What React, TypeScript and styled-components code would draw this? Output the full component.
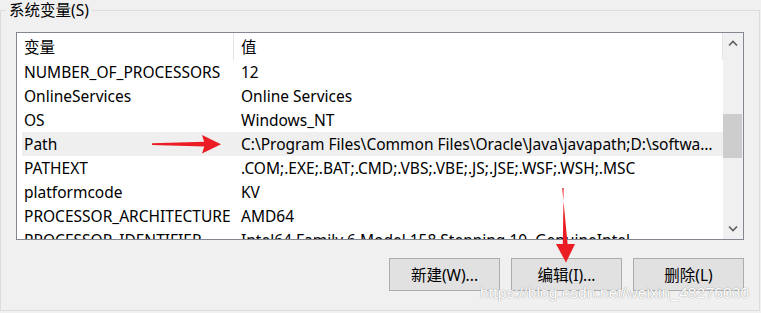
import React, { FC } from "react";
import styled, { createGlobalStyle } from "styled-components";

const GlobalStyle = createGlobalStyle`
	html, body {
		margin: 0;
		padding: 0;
		background: #f0f0f0;
		width: 761px;
		height: 313px;
		overflow: hidden;
	}
`;

const FONT = `"Noto Sans", "Noto Sans CJK SC", sans-serif`;

const Page = styled.div`
	position: relative;
	width: 761px;
	height: 313px;
	font-family: ${FONT};
	font-size: 15.5px;
	color: #000;
`;

const Group = styled.fieldset`
	margin: 0;
	padding: 0 0 19px 0;
	width: 760px;
	height: 311px;
	box-sizing: border-box;
	border: 1px solid #dcdcdc;
	display: flex;
	flex-direction: column;
`;

const Legend = styled.legend`
	margin-left: 5px;
	padding: 0 3px;
	line-height: 20px;
	font-size: 15.5px;
`;

const ListBox = styled.div`
	margin: 12px 15px 0 15px;
	height: 208px;
	box-sizing: border-box;
	border: 1px solid #828790;
	background: #fff;
	display: flex;
	overflow: hidden;
`;

const Table = styled.div`
	flex: 1;
	min-width: 0;
	padding-left: 5px;
	overflow: hidden;
`;

const Row = styled.div<{ $selected?: boolean; $header?: boolean }>`
	display: grid;
	grid-template-columns: 212px 489px;
	height: ${(p) => (p.$header ? "27px" : "24px")};
	line-height: ${(p) => (p.$header ? "28px" : "24px")};
	background: ${(p) => (p.$selected ? "#efefef" : "transparent")};
	white-space: nowrap;
`;

const Cell = styled.div<{ $header?: boolean; $value?: boolean }>`
	padding-left: ${(p) => (p.$value ? "7px" : "2px")};
	padding-right: ${(p) => (p.$value ? "6px" : "0")};
	overflow: hidden;
	text-overflow: ${(p) => (p.$value ? "ellipsis" : "clip")};
	border-right: ${(p) => (p.$header ? "1px solid #e5e5e5" : "none")};
	box-sizing: border-box;
`;

const ScrollBar = styled.div`
	width: 20px;
	flex: none;
	background: #f0f0f0;
	display: flex;
	flex-direction: column;
`;

const ScrollButton = styled.div`
	height: 20px;
	display: flex;
	align-items: center;
	justify-content: center;
	color: #606060;
`;

const Track = styled.div`
	flex: 1;
`;

const Thumb = styled.div`
	margin: 61px 1px 0 0;
	height: 44px;
	background: #cdcdcd;
`;

const ButtonRow = styled.div`
	margin: 18px 15px 0 0;
	display: flex;
	justify-content: flex-end;
	gap: 11px;
`;

const Button = styled.button`
	width: 111px;
	height: 33px;
	border: 1px solid #adadad;
	background: #e1e1e1;
	font-family: ${FONT};
	font-size: 15.5px;
	color: #000;
	padding: 0;
`;

const Watermark = styled.div`
	position: absolute;
	left: 480px;
	top: 284px;
	font-family: "Liberation Sans", Arial, sans-serif;
	font-size: 15.5px;
	letter-spacing: 0.15px;
	color: #ffffff;
	text-shadow: 0 0 1px #a0a0a0, 0 0 1px #a0a0a0;
	pointer-events: none;
`;

const Overlay = styled.svg`
	position: absolute;
	left: 0;
	top: 0;
	pointer-events: none;
`;

type Variable = {
	name: string,
	value: string,
	selected?: boolean
};

const variables: Variable[] = [
	{ name: "NUMBER_OF_PROCESSORS", value: "12" },
	{ name: "OnlineServices", value: "Online Services" },
	{ name: "OS", value: "Windows_NT" },
	{
		name: "Path",
		value: "C:\\Program Files\\Common Files\\Oracle\\Java\\javapath;D:\\software\\Python39\\Scripts\\",
		selected: true
	},
	{ name: "PATHEXT", value: ".COM;.EXE;.BAT;.CMD;.VBS;.VBE;.JS;.JSE;.WSF;.WSH;.MSC" },
	{ name: "platformcode", value: "KV" },
	{ name: "PROCESSOR_ARCHITECTURE", value: "AMD64" },
	{ name: "PROCESSOR_IDENTIFIER", value: "Intel64 Family 6 Model 158 Stepping 10, GenuineIntel" }
];

const Chevron: FC<{ up?: boolean }> = ({ up }) => (
	<svg width="10" height="6" viewBox="0 0 10 6">
		<path
			d={up ? "M1 5.5 L5 1.5 L9 5.5" : "M1 0.5 L5 4.5 L9 0.5"}
			fill="none"
			stroke="currentColor"
			strokeWidth="1.6"
		/>
	</svg>
);

export default function App() {
	return (
		<Page>
			<GlobalStyle />
			<Group>
				<Legend>系统变量(S)</Legend>
				<ListBox>
					<Table>
						<Row $header>
							<Cell $header>变量</Cell>
							<Cell $header $value>值</Cell>
						</Row>
						{variables.map((v) => (
							<Row key={v.name} $selected={v.selected}>
								<Cell>{v.name}</Cell>
								<Cell $value>{v.value}</Cell>
							</Row>
						))}
					</Table>
					<ScrollBar>
						<ScrollButton><Chevron up /></ScrollButton>
						<Track><Thumb /></Track>
						<ScrollButton><Chevron /></ScrollButton>
					</ScrollBar>
				</ListBox>
				<ButtonRow>
					<Button>新建(W)...</Button>
					<Button>编辑(I)...</Button>
					<Button>删除(L)</Button>
				</ButtonRow>
			</Group>
			<Watermark>https://blog.csdn.net/weixin_48276030</Watermark>
			<Overlay width="761" height="313" viewBox="0 0 761 313">
				<path d="M152 143.2 L205 141.8 L205 146.6 L152 145 Z" fill="#ec1c24" />
				<path d="M202 135 L221 144.3 L202 153.5 L205 144.3 Z" fill="#ec1c24" />
				<path d="M562.2 188 L567.8 246 L562.8 246 L563.6 188 Z" fill="#ec1c24" />
				<path d="M556 244 L575 244 L566 262.5 Z" fill="#ec1c24" />
			</Overlay>
		</Page>
	);
}
